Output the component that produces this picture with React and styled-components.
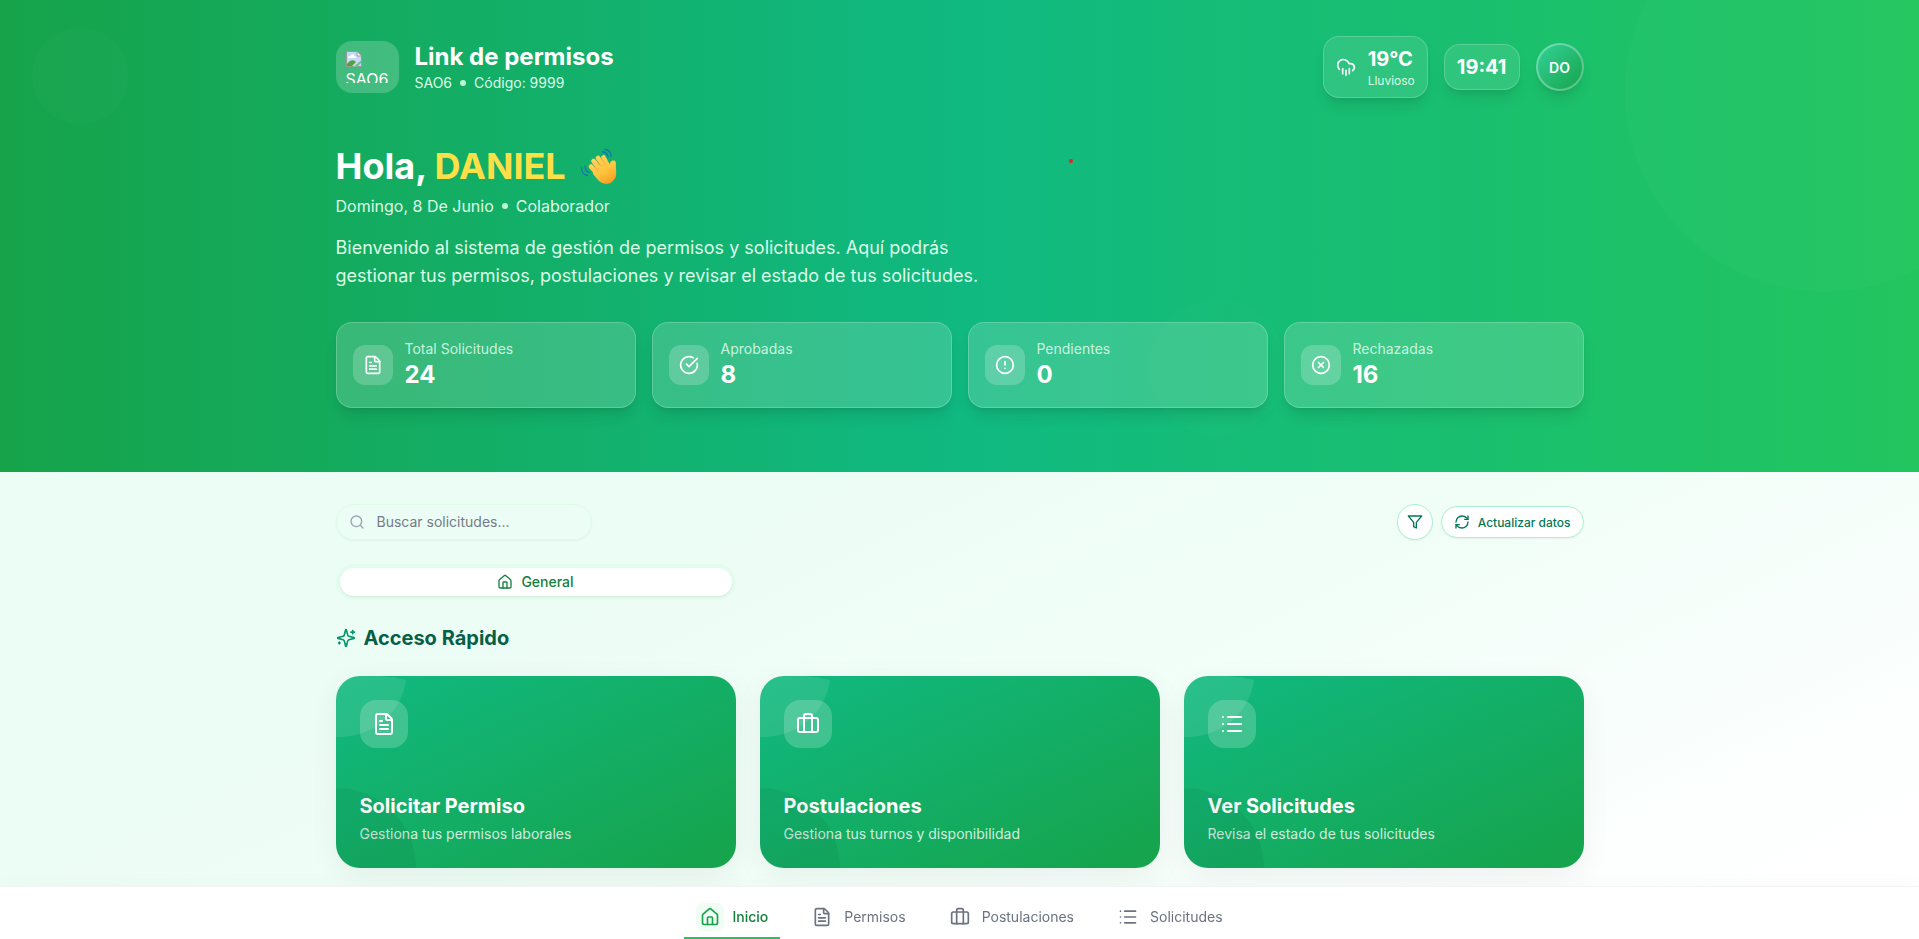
import React from "react";
import styled, { createGlobalStyle } from "styled-components";
import {
  FileText,
  Briefcase,
  List,
  House,
  Search,
  RefreshCw,
  CloudRain,
  CircleCheckBig,
  CircleAlert,
  CircleX,
} from "lucide-react";

const GlobalStyle = createGlobalStyle`
  *, *::before, *::after { box-sizing: border-box; }
  body {
    margin: 0;
    font-family: Inter, "Liberation Sans", sans-serif;
    color: #111827;
  }
  h1, h2, h3, p { margin: 0; }
  button, input { font-family: inherit; }
`;

const Page = styled.div`
  min-height: 100vh;
  padding-bottom: 71px;
  background: linear-gradient(to bottom right, #ecfdf5 45%, #f1fef8 65%, #ffffff 95%);
`;

const Container = styled.div`
  position: relative;
  max-width: 1280px;
  margin: 0 auto;
  padding: 0 16px;
`;

const Hero = styled.header`
  position: relative;
  overflow: hidden;
  padding: 36px 0 64px;
  color: #ffffff;
  background: linear-gradient(to right, #16a34a, #10b981, #22c55e);
`;

const Bubble = styled.span`
  position: absolute;
  top: ${(p) => p.$top}px;
  left: ${(p) => p.$left};
  width: ${(p) => p.$size}px;
  height: ${(p) => p.$size}px;
  border-radius: 50%;
  background: ${(p) => p.$color};
`;

const TopBar = styled.div`
  display: flex;
  align-items: center;
  justify-content: space-between;
`;

const Cluster = styled.div`
  display: flex;
  align-items: center;
  gap: 16px;
`;

const LogoBox = styled.div`
  padding: 10px;
  border-radius: 16px;
  background: rgba(255, 255, 255, 0.2);
`;

const LogoClip = styled.div`
  display: flex;
  flex-direction: column;
  width: 43px;
  height: 32px;
  overflow: hidden;
  font-size: 16px;
  line-height: 24px;

  svg { flex: none; }
`;

const BrandTitle = styled.h1`
  font-size: 24px;
  line-height: 32px;
  font-weight: 700;
`;

const MetaLine = styled.p`
  display: flex;
  align-items: center;
  gap: 8px;
  font-size: ${(p) => p.$size}px;
  line-height: ${(p) => p.$line}px;
  color: #dcfce7;
`;

const Dot = styled.span`
  width: 6px;
  height: 6px;
  border-radius: 50%;
  background: #bbf7d0;
`;

const Glass = styled.div`
  display: flex;
  align-items: center;
  gap: 12px;
  border: 1px solid rgba(255, 255, 255, 0.2);
  border-radius: 16px;
  background: rgba(255, 255, 255, 0.1);
  box-shadow: 0 10px 15px -3px rgba(0, 0, 0, 0.1), 0 4px 6px -4px rgba(0, 0, 0, 0.1);
`;

const Weather = styled(Glass)`
  padding: 8px 12px;
`;

const Temperature = styled.div`
  font-size: 20px;
  line-height: 28px;
  font-weight: 700;
`;

const Condition = styled.div`
  font-size: 12px;
  line-height: 16px;
  color: #dcfce7;
`;

const Clock = styled(Glass)`
  padding: 8px 12px;
  font-size: 20px;
  line-height: 28px;
  font-weight: 700;
`;

const Avatar = styled.button`
  width: 48px;
  height: 48px;
  padding: 0;
  border: 2px solid rgba(255, 255, 255, 0.3);
  border-radius: 50%;
  background: linear-gradient(to bottom right, #34d399, #16a34a) border-box;
  box-shadow: 0 10px 15px -3px rgba(0, 0, 0, 0.1), 0 4px 6px -4px rgba(0, 0, 0, 0.1);
  color: #ffffff;
  font-size: 14px;
  font-weight: 600;
`;

const Greeting = styled.h2`
  display: flex;
  align-items: center;
  gap: 12px;
  margin-top: 48px;
  font-size: 36px;
  line-height: 40px;
  font-weight: 700;
`;

const Name = styled.span`
  color: #fde047;
`;

const DateRow = styled.div`
  margin-top: 8px;
`;

const Welcome = styled.p`
  max-width: 672px;
  margin-top: 16px;
  font-size: 18px;
  line-height: 28px;
  color: #dcfce7;
`;

const Stats = styled.div`
  display: grid;
  grid-template-columns: repeat(4, 1fr);
  gap: 16px;
  margin-top: 32px;
`;

const StatCard = styled(Glass)`
  padding: 16px;
  background: rgba(255, 255, 255, 0.16);
`;

const IconTile = styled.span`
  display: flex;
  align-items: center;
  justify-content: center;
  flex: none;
  width: ${(p) => p.$size}px;
  height: ${(p) => p.$size}px;
  border-radius: ${(p) => p.$radius}px;
  background: rgba(255, 255, 255, 0.2);
`;

const StatLabel = styled.div`
  font-size: 14px;
  line-height: 20px;
  color: rgba(220, 252, 231, 0.9);
`;

const StatValue = styled.div`
  font-size: 24px;
  line-height: 32px;
  font-weight: 700;
`;

const Toolbar = styled.div`
  display: flex;
  align-items: center;
  justify-content: space-between;
  margin-top: 32px;
`;

const SearchField = styled.label`
  display: flex;
  align-items: center;
  gap: 12px;
  width: 256px;
  height: 36px;
  padding: 0 12px;
  border: 1px solid #dcfce7;
  border-radius: 18px;
  box-shadow: 0 1px 2px rgba(0, 0, 0, 0.05);
  color: #9ca3af;

  svg { flex: none; }
`;

const SearchInput = styled.input`
  flex: 1;
  min-width: 0;
  padding: 0;
  border: 0;
  outline: 0;
  background: transparent;
  font-size: 14px;
  line-height: 20px;
  color: #111827;

  &::placeholder { color: #757b84; }
`;

const Actions = styled.div`
  display: flex;
  align-items: center;
  gap: 8px;
`;

const PillButton = styled.button`
  display: flex;
  align-items: center;
  justify-content: center;
  gap: 8px;
  height: ${(p) => (p.$round ? 36 : 32)}px;
  width: ${(p) => (p.$round ? "36px" : "auto")};
  padding: ${(p) => (p.$round ? "0" : "0 12px")};
  border: 1px solid #a7f3d0;
  border-radius: 18px;
  background: #ffffff;
  box-shadow: 0 1px 2px rgba(0, 0, 0, 0.05);
  color: #047857;
  font-size: 12px;
  font-weight: 500;
`;

const Tabs = styled.div`
  display: flex;
  max-width: 400px;
  margin-top: 24px;
  padding: 4px;
  border-radius: 18px;
  background: rgba(220, 252, 231, 0.6);
`;

const Tab = styled.button`
  display: flex;
  flex: 1;
  align-items: center;
  justify-content: center;
  gap: 8px;
  height: 28px;
  padding: 0;
  border: 0;
  border-radius: 14px;
  background: #ffffff;
  box-shadow: 0 1px 2px rgba(0, 0, 0, 0.08);
  color: #15803d;
  font-size: 14px;
  line-height: 20px;
  font-weight: 500;
`;

const SectionTitle = styled.h2`
  display: flex;
  align-items: center;
  gap: 8px;
  margin-top: 24px;
  font-size: 20px;
  line-height: 28px;
  font-weight: 700;
  color: #065f46;

  svg { color: #059669; }
`;

const QuickGrid = styled.div`
  display: grid;
  grid-template-columns: repeat(3, 1fr);
  gap: 24px;
  margin-top: 24px;
`;

const QuickCard = styled.a`
  position: relative;
  display: flex;
  flex-direction: column;
  justify-content: space-between;
  height: 192px;
  padding: 24px;
  overflow: hidden;
  border-radius: 24px;
  background: linear-gradient(to bottom right, #10b981, #16a34a);
  box-shadow: 0 8px 30px rgba(0, 0, 0, 0.06);
  color: #ffffff;
  text-decoration: none;
`;

const Petal = styled.svg`
  position: absolute;
  top: 0;
  left: 0;
`;

const CornerShade = styled.span`
  position: absolute;
  bottom: 0;
  left: 0;
  width: 80px;
  height: 80px;
  border-top-right-radius: 80px;
  background: rgba(0, 0, 0, 0.05);
`;

const QuickTitle = styled.h3`
  font-size: 20px;
  line-height: 28px;
  font-weight: 700;
`;

const QuickText = styled.p`
  margin-top: 4px;
  font-size: 14px;
  line-height: 20px;
  color: rgba(255, 255, 255, 0.8);
`;

const BottomNav = styled.nav`
  position: fixed;
  right: 0;
  bottom: 0;
  left: 0;
  display: flex;
  justify-content: center;
  gap: 16px;
  padding-top: 8px;
  border-top: 1px solid #f3f4f6;
  background: rgba(255, 255, 255, 0.98);
  box-shadow: 0 -4px 20px rgba(0, 0, 0, 0.02);
`;

const NavItem = styled.a`
  display: flex;
  align-items: center;
  gap: 8px;
  padding: 8px 12px 6px;
  border-bottom: 2px solid ${(p) => (p.$active ? "#22c55e" : "transparent")};
  color: ${(p) => (p.$active ? "#15803d" : "#6b7280")};
  font-size: 14px;
  line-height: 20px;
  font-weight: ${(p) => (p.$active ? 500 : 400)};
  text-decoration: none;
`;

const NavIcon = styled.span`
  display: flex;
  padding: 4px;
  border-radius: 8px;
  background: ${(p) => (p.$active ? "#f0fdf4" : "transparent")};
  color: ${(p) => (p.$active ? "#16a34a" : "#6b7280")};
`;

const strokeProps = {
  viewBox: "0 0 24 24",
  fill: "none",
  stroke: "currentColor",
  strokeWidth: 2,
  strokeLinecap: "round",
  strokeLinejoin: "round",
};

const FunnelIcon = () => (
  <svg width="16" height="16" {...strokeProps}>
    <polygon points="22 3 2 3 10 12.46 10 19 14 21 14 12.46 22 3" />
  </svg>
);

const SparklesIcon = () => (
  <svg width="20" height="20" {...strokeProps}>
    <path d="M9.937 15.5A2 2 0 0 0 8.5 14.063l-6.135-1.582a.5.5 0 0 1 0-.962L8.5 9.936A2 2 0 0 0 9.937 8.5l1.582-6.135a.5.5 0 0 1 .963 0L14.063 8.5A2 2 0 0 0 15.5 9.937l6.135 1.581a.5.5 0 0 1 0 .964L15.5 14.063a2 2 0 0 0-1.437 1.437l-1.582 6.135a.5.5 0 0 1-.963 0z" />
    <path d="M20 3v4M22 5h-4M4 17v2M5 18H3" />
  </svg>
);

const BrokenImage = () => (
  <svg width="16" height="16" viewBox="0 0 16 16">
    <path d="M.5 .5H11L15.500 5V15.500H.5Z" fill="#c6d9f7" stroke="#9a9a9a" />
    <path d="M2 7c0-2 2-2 2.500-2 .5-2 3.500-2 4 0 1 0 2 .5 2 2z" fill="#ffffff" />
    <path d="M1 15v-2c3-4 6-5 9-2l-4 4z" fill="#4fa53a" />
    <path d="M11 .5V5h4.500z" fill="#ffffff" stroke="#9a9a9a" />
    <path d="M7.500 16 16 8.500V11l-5 5z" fill="#6fbf8c" />
  </svg>
);

const WavingHand = () => (
  <svg width="40" height="40" viewBox="0 0 40 40">
    <defs>
      <linearGradient id="skin" gradientUnits="userSpaceOnUse" x1="16" y1="8" x2="34" y2="38">
        <stop offset="0" stopColor="#ffd766" />
        <stop offset="0.6" stopColor="#ffc23c" />
        <stop offset="1" stopColor="#f39a1f" />
      </linearGradient>
    </defs>
    <path
      d="M17 20 31 19C32 17 33 14 36 14.500C39 15 37.500 19 38 23C38.500 29 38 32 35 35C31 39 25 38.500 21 35L15 28Z"
      fill="url(#skin)"
    />
    <g fill="none" stroke="url(#skin)" strokeWidth="4.600" strokeLinecap="round">
      <path d="M20 29 13 20.500M23 25 15.500 15M26.500 22 20 12M30 20 25.500 11.500" />
    </g>
    <g fill="none" stroke="#e8951c" strokeWidth="0.700" strokeLinecap="round" opacity="0.7">
      <path d="M20 24.500 15.500 19M23.500 20.500 18.500 14M27 18 23.500 12.500" />
    </g>
    <g fill="none" stroke="#1672b5" strokeWidth="1.300" strokeLinecap="round">
      <path d="M27 3.500c3.500 0 6 3 6 7M24.500 6c3 0 5 2 5.500 5" />
      <path d="M3.500 22c0 4 2.500 7 6 7.500M7 20c0 3 1.500 5.500 4.500 6.500" />
    </g>
  </svg>
);

const stats = [
  { label: "Total Solicitudes", value: "24", Icon: FileText },
  { label: "Aprobadas", value: "8", Icon: CircleCheckBig },
  { label: "Pendientes", value: "0", Icon: CircleAlert },
  { label: "Rechazadas", value: "16", Icon: CircleX },
];

const quickLinks = [
  { title: "Solicitar Permiso", text: "Gestiona tus permisos laborales", Icon: FileText },
  { title: "Postulaciones", text: "Gestiona tus turnos y disponibilidad", Icon: Briefcase },
  { title: "Ver Solicitudes", text: "Revisa el estado de tus solicitudes", Icon: List },
];

const navItems = [
  { label: "Inicio", Icon: House, active: true },
  { label: "Permisos", Icon: FileText },
  { label: "Postulaciones", Icon: Briefcase },
  { label: "Solicitudes", Icon: List },
];

export default function App() {
  return (
    <Page>
      <GlobalStyle />
      <Hero>
        <Bubble $top={-108} $left="84.7%" $size={400} $color="rgba(255,255,255,0.02)" />
        <Bubble $top={28} $left="32px" $size={96} $color="rgba(255,255,255,0.02)" />
        <Bubble $top={299} $left="59.9%" $size={137} $color="rgba(74,222,128,0.05)" />
        <Bubble $top={159} $left="55.7%" $size={4} $color="#ef1c24" />
        <Container>
          <TopBar>
            <Cluster>
              <LogoBox>
                <LogoClip role="img" aria-label="SAO6">
                  <BrokenImage />
                  <span>SAO6</span>
                </LogoClip>
              </LogoBox>
              <div>
                <BrandTitle>Link de permisos</BrandTitle>
                <MetaLine $size={14} $line={20}>
                  <span>SAO6</span>
                  <Dot />
                  <span>Código: 9999</span>
                </MetaLine>
              </div>
            </Cluster>
            <Cluster>
              <Weather>
                <CloudRain size={20} />
                <div>
                  <Temperature>19°C</Temperature>
                  <Condition>Lluvioso</Condition>
                </div>
              </Weather>
              <Clock>19:41</Clock>
              <Avatar type="button">DO</Avatar>
            </Cluster>
          </TopBar>
          <Greeting>
            <span>
              Hola, <Name>DANIEL</Name>
            </span>
            <WavingHand />
          </Greeting>
          <DateRow>
            <MetaLine $size={16} $line={24}>
              <span>Domingo, 8 De Junio</span>
              <Dot />
              <span>Colaborador</span>
            </MetaLine>
          </DateRow>
          <Welcome>
            Bienvenido al sistema de gestión de permisos y solicitudes. Aquí podrás gestionar tus
            permisos, postulaciones y revisar el estado de tus solicitudes.
          </Welcome>
          <Stats>
            {stats.map(({ label, value, Icon }) => (
              <StatCard key={label}>
                <IconTile $size={40} $radius={12}>
                  <Icon size={20} />
                </IconTile>
                <div>
                  <StatLabel>{label}</StatLabel>
                  <StatValue>{value}</StatValue>
                </div>
              </StatCard>
            ))}
          </Stats>
        </Container>
      </Hero>
      <Container as="main">
        <Toolbar>
          <SearchField>
            <Search size={16} />
            <SearchInput type="text" placeholder="Buscar solicitudes..." aria-label="Buscar solicitudes" />
          </SearchField>
          <Actions>
            <PillButton type="button" $round aria-label="Filtrar">
              <FunnelIcon />
            </PillButton>
            <PillButton type="button">
              <RefreshCw size={16} />
              Actualizar datos
            </PillButton>
          </Actions>
        </Toolbar>
        <Tabs role="tablist">
          <Tab type="button" role="tab" aria-selected="true">
            <House size={16} />
            General
          </Tab>
        </Tabs>
        <SectionTitle>
          <SparklesIcon />
          Acceso Rápido
        </SectionTitle>
        <QuickGrid>
          {quickLinks.map(({ title, text, Icon }) => (
            <QuickCard href="#" key={title}>
              <Petal width="72" height="62" viewBox="0 0 72 62">
                <path d="M0 0H44Q58 1 70 4C66 36 38 62 0 61Z" fill="#ffffff" fillOpacity="0.1" />
              </Petal>
              <IconTile $size={48} $radius={16}>
                <Icon size={24} />
              </IconTile>
              <div>
                <QuickTitle>{title}</QuickTitle>
                <QuickText>{text}</QuickText>
              </div>
              <CornerShade />
            </QuickCard>
          ))}
        </QuickGrid>
      </Container>
      <BottomNav>
        {navItems.map(({ label, Icon, active }) => (
          <NavItem href="#" key={label} $active={active}>
            <NavIcon $active={active}>
              <Icon size={20} />
            </NavIcon>
            {label}
          </NavItem>
        ))}
      </BottomNav>
    </Page>
  );
}
